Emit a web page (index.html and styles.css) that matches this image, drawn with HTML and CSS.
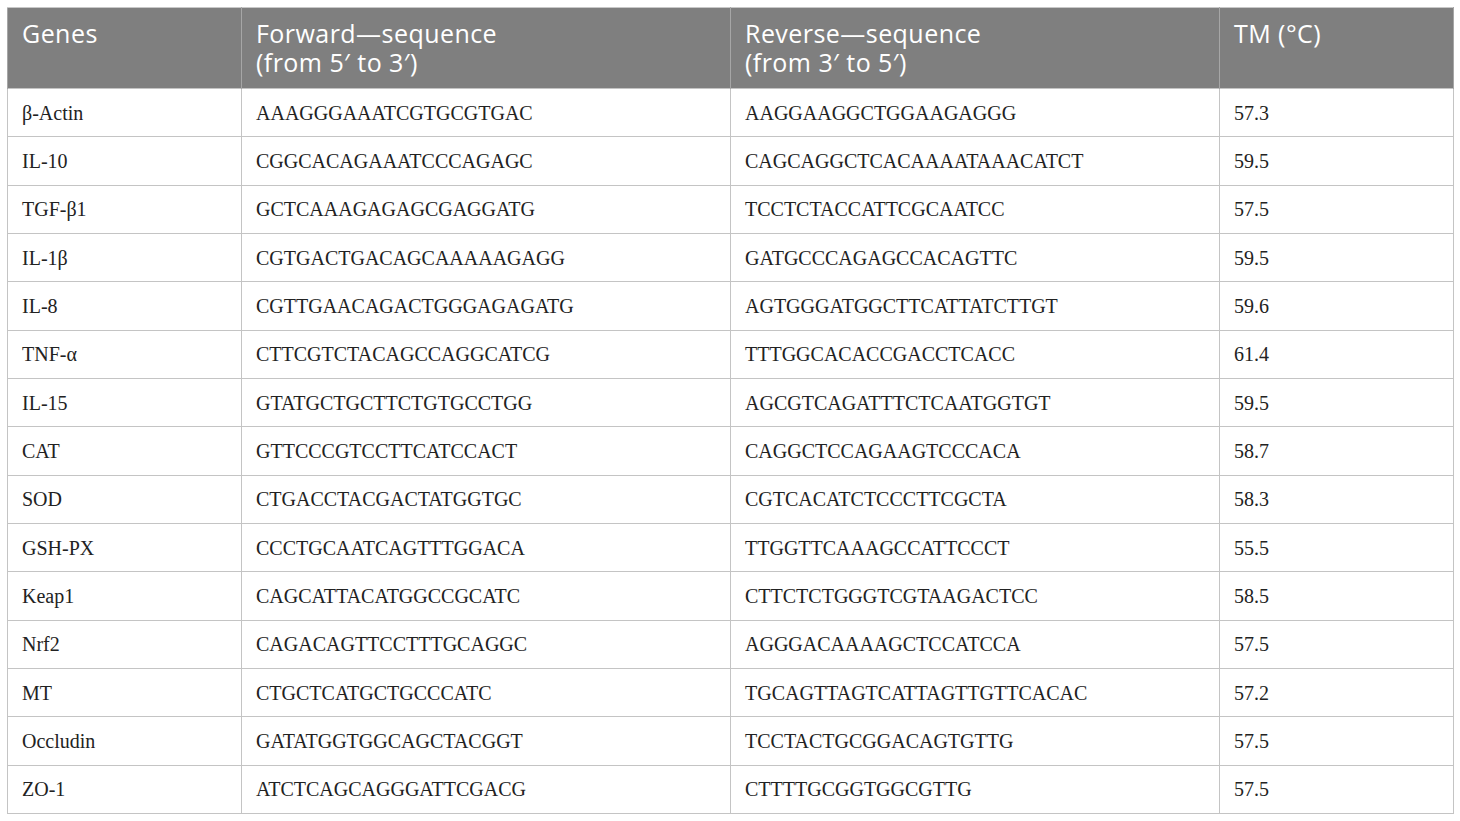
FILE: index.html
```html
<!DOCTYPE html>
<html>
<head>
<meta charset="utf-8">
<link rel="stylesheet" href="styles.css">
</head>
<body>
<table class="primers">
  <colgroup>
    <col class="c-gene">
    <col class="c-seq">
    <col class="c-seq">
    <col class="c-tm">
  </colgroup>
  <thead>
    <tr>
      <th>Genes</th>
      <th><span class="hl">Forward—sequence</span><span class="hl">(from 5′ to 3′)</span></th>
      <th><span class="hl">Reverse—sequence</span><span class="hl">(from 3′ to 5′)</span></th>
      <th>TM (°C)</th>
    </tr>
  </thead>
  <tbody>
    <tr><td>β-Actin</td><td>AAAGGGAAATCGTGCGTGAC</td><td>AAGGAAGGCTGGAAGAGGG</td><td>57.3</td></tr>
    <tr><td>IL-10</td><td>CGGCACAGAAATCCCAGAGC</td><td>CAGCAGGCTCACAAAATAAACATCT</td><td>59.5</td></tr>
    <tr><td>TGF-β1</td><td>GCTCAAAGAGAGCGAGGATG</td><td>TCCTCTACCATTCGCAATCC</td><td>57.5</td></tr>
    <tr><td>IL-1β</td><td>CGTGACTGACAGCAAAAAGAGG</td><td>GATGCCCAGAGCCACAGTTC</td><td>59.5</td></tr>
    <tr><td>IL-8</td><td>CGTTGAACAGACTGGGAGAGATG</td><td>AGTGGGATGGCTTCATTATCTTGT</td><td>59.6</td></tr>
    <tr><td>TNF-α</td><td>CTTCGTCTACAGCCAGGCATCG</td><td>TTTGGCACACCGACCTCACC</td><td>61.4</td></tr>
    <tr><td>IL-15</td><td>GTATGCTGCTTCTGTGCCTGG</td><td>AGCGTCAGATTTCTCAATGGTGT</td><td>59.5</td></tr>
    <tr><td>CAT</td><td>GTTCCCGTCCTTCATCCACT</td><td>CAGGCTCCAGAAGTCCCACA</td><td>58.7</td></tr>
    <tr><td>SOD</td><td>CTGACCTACGACTATGGTGC</td><td>CGTCACATCTCCCTTCGCTA</td><td>58.3</td></tr>
    <tr><td>GSH-PX</td><td>CCCTGCAATCAGTTTGGACA</td><td>TTGGTTCAAAGCCATTCCCT</td><td>55.5</td></tr>
    <tr><td>Keap1</td><td>CAGCATTACATGGCCGCATC</td><td>CTTCTCTGGGTCGTAAGACTCC</td><td>58.5</td></tr>
    <tr><td>Nrf2</td><td>CAGACAGTTCCTTTGCAGGC</td><td>AGGGACAAAAGCTCCATCCA</td><td>57.5</td></tr>
    <tr><td>MT</td><td>CTGCTCATGCTGCCCATC</td><td>TGCAGTTAGTCATTAGTTGTTCACAC</td><td>57.2</td></tr>
    <tr><td>Occludin</td><td>GATATGGTGGCAGCTACGGT</td><td>TCCTACTGCGGACAGTGTTG</td><td>57.5</td></tr>
    <tr><td>ZO-1</td><td>ATCTCAGCAGGGATTCGACG</td><td>CTTTTGCGGTGGCGTTG</td><td>57.5</td></tr>
  </tbody>
</table>
</body>
</html>
```
FILE: styles.css
```css
html, body {
  margin: 0;
  padding: 0;
  background: #ffffff;
}
body {
  padding: 7px;
}
.primers {
  width: 1447px;
  border-collapse: collapse;
  table-layout: fixed;
  border: 1px solid #c8c8c8;
}
.c-gene { width: 234px; }
.c-seq { width: 489px; }
.c-tm { width: 234px; }
.primers th {
  background: #7f7f7f;
  color: #ffffff;
  font-family: "Open Sans", "Liberation Sans", sans-serif;
  font-weight: 400;
  font-size: 25px;
  letter-spacing: 0.45px;
  line-height: 29px;
  text-align: left;
  vertical-align: top;
  padding: 11px 14px 7px 14px;
  height: 81px;
  box-sizing: border-box;
  border-top: 1px solid #c8c8c8;
  border-left: 1px solid #a6a6a6;
  border-right: 1px solid #a6a6a6;
}
.hl {
  display: block;
  height: 29px;
  overflow: visible;
}
.primers td {
  font-family: "Liberation Serif", "Times New Roman", serif;
  font-size: 20px;
  color: #222222;
  padding: 1px 14px 0 14px;
  height: 48.33px;
  box-sizing: border-box;
  vertical-align: middle;
  border: 1px solid #c4c4c4;
  white-space: nowrap;
}
```
